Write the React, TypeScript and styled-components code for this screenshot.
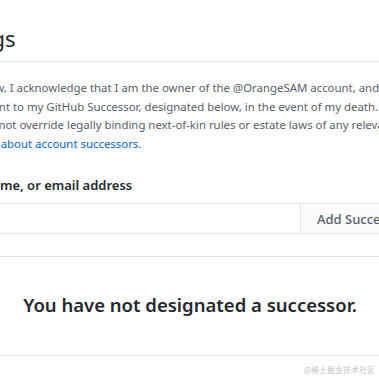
import React from 'react';
import styled, { createGlobalStyle } from 'styled-components';

const GlobalStyle = createGlobalStyle`
	html, body {
		margin: 0;
		padding: 0;
		background: #ffffff;
	}
	body {
		font-family: 'Noto Sans', 'Open Sans', 'Liberation Sans', sans-serif;
		color: #24292e;
	}
`;

const Viewport = styled.div`
	position: relative;
	width: 379px;
	height: 379px;
	overflow: hidden;
`;

const Column = styled.main`
	width: 730px;
	margin-left: -175px;
	padding-top: 23px;
`;

const Subhead = styled.div`
	display: flex;
	align-items: flex-end;
	padding-bottom: 8px;
	margin-bottom: 17px;
	border-bottom: 1px solid #e1e4e8;
`;

const Heading = styled.h2`
	margin: 0;
	font-size: 22px;
	font-weight: 400;
	line-height: 30px;
	color: #24292e;
`;

const Note = styled.p`
	margin: 0 0 22px;
	font-size: 11.4px;
	line-height: 18.5px;
	color: #586069;
	white-space: nowrap;
`;

const Link = styled.a`
	color: #0366d6;
	text-decoration: none;
`;

const Label = styled.label`
	display: block;
	font-size: 13px;
	font-weight: 600;
	line-height: 20px;
	color: #24292e;
	margin-bottom: 8px;
`;

const InputGroup = styled.div`
	display: flex;
	width: 600px;
	height: 31px;
	margin-bottom: 22px;
`;

const TextInput = styled.input`
	flex: 0 0 475px;
	box-sizing: border-box;
	height: 100%;
	border: 1px solid #e1e4e8;
	border-right: none;
	border-radius: 6px 0 0 6px;
	background: #ffffff;
	outline: none;
	padding: 0 8px;
	font: inherit;
`;

const AddButton = styled.button`
	flex: 1;
	box-sizing: border-box;
	height: 100%;
	border: 1px solid #e1e4e8;
	border-radius: 0 6px 6px 0;
	background: #fafbfc;
	padding: 0 16px;
	text-align: left;
	font-family: inherit;
	font-size: 13px;
	font-weight: 500;
	color: #586069;
	white-space: nowrap;
`;

const Blankslate = styled.div`
	box-sizing: border-box;
	height: 100px;
	padding-bottom: 3px;
	display: flex;
	align-items: center;
	justify-content: center;
	border: 1px solid #e1e4e8;
	border-radius: 6px;
`;

const BlankTitle = styled.h3`
	margin: 0;
	font-size: 18.5px;
	font-weight: 600;
	color: #24292e;
`;

const Watermark = styled.span`
	position: absolute;
	right: 4px;
	bottom: 4px;
	font-family: 'Noto Sans CJK SC', sans-serif;
	font-size: 8px;
	color: #c4c4c4;
`;

export default function App() {
	return (
		<>
			<GlobalStyle />
			<Viewport>
				<Column>
					<Subhead>
						<Heading>Successor settings</Heading>
					</Subhead>
					<Note>
						By clicking “Add Successor” below, I acknowledge that I am the owner of the @OrangeSAM account, and am authorizing GitHub to
						<br />
						move contents within that account to my GitHub Successor, designated below, in the event of my death. I understand that this
						<br />
						designation of a successor does not override legally binding next-of-kin rules or estate laws of any relevant jurisdiction, and does not
						<br />
						act as a binding will. Learn more <Link href="#">about account successors</Link>.
					</Note>
					<Label htmlFor="successor">Search by username, full name, or email address</Label>
					<InputGroup>
						<TextInput id="successor" type="text" />
						<AddButton type="button">Add Successor</AddButton>
					</InputGroup>
					<Blankslate>
						<BlankTitle>You have not designated a successor.</BlankTitle>
					</Blankslate>
				</Column>
				<Watermark>@稀土掘金技术社区</Watermark>
			</Viewport>
		</>
	);
}
